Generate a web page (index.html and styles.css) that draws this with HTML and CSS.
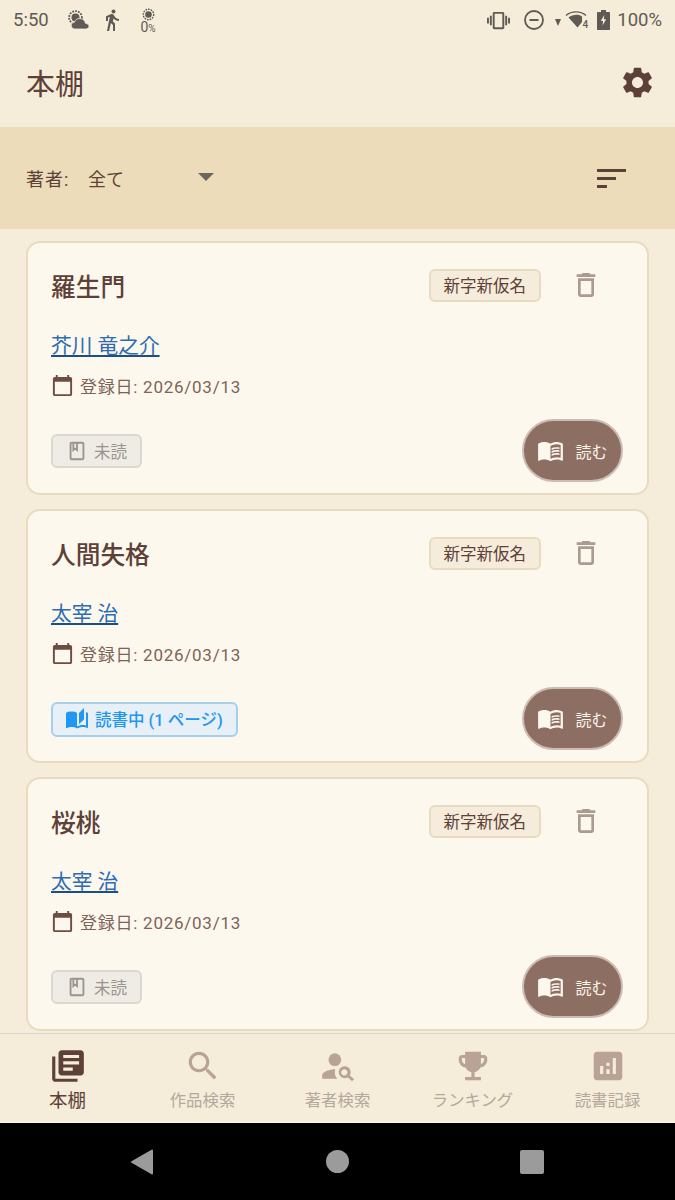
FILE: index.html
```html
<!DOCTYPE html>
<html lang="ja">
<head>
    <meta charset="UTF-8">
    <meta name="viewport" content="width=device-width, initial-scale=1.0">
    <title>本棚</title>
    <link rel="stylesheet" href="styles.css">
</head>
<body>
    <svg class="sprite">
        <symbol id="i-trash" viewBox="0 0 24 24"><path d="M6 19c0 1.1.9 2 2 2h8c1.1 0 2-.9 2-2V7H6v12zM8 9h8v10H8V9zm7.5-5l-1-1h-5l-1 1H5v2h14V4z"/></symbol>
        <symbol id="i-calendar" viewBox="0 0 24 24"><path d="M20 3h-1V1h-2v2H7V1H5v2H4c-1.1 0-2 .9-2 2v16c0 1.1.9 2 2 2h16c1.1 0 2-.9 2-2V5c0-1.1-.9-2-2-2zm0 18H4V8h16v13z"/></symbol>
        <symbol id="i-book" viewBox="0 0 24 24"><path d="M18 2H6c-1.1 0-2 .9-2 2v16c0 1.1.9 2 2 2h12c1.1 0 2-.9 2-2V4c0-1.1-.9-2-2-2zM9 4h2v5l-1-.75L9 9V4zm9 16H6V4h1v9l3-2.25L13 13V4h5v16z"/></symbol>
        <symbol id="i-menubook" viewBox="0 0 24 24"><path d="M21 5c-1.11-.35-2.33-.5-3.5-.5-1.95 0-4.05.4-5.5 1.5-1.45-1.1-3.55-1.5-5.5-1.5S2.45 4.9 1 6v14.65c0 .25.25.5.5.5.1 0 .15-.05.25-.05C3.1 20.45 5.05 20 6.5 20c1.95 0 4.05.4 5.5 1.5 1.35-.85 3.8-1.5 5.5-1.5 1.65 0 3.35.3 4.75 1.05.1.05.15.05.25.05.25 0 .5-.25.5-.5V6c-.6-.45-1.25-.75-2-1zm0 13.5c-1.1-.35-2.3-.5-3.5-.5-1.7 0-4.15.65-5.5 1.5V8c1.35-.85 3.8-1.5 5.5-1.5 1.2 0 2.4.15 3.5.5v11.5z"/><path d="M17.5 10.5c.88 0 1.73.09 2.5.26V9.24c-.79-.15-1.64-.24-2.5-.24-1.7 0-3.24.29-4.5.83v1.66c1.13-.64 2.7-.99 4.5-.99zM13 12.49v1.66c1.13-.64 2.7-.99 4.5-.99.88 0 1.73.09 2.5.26V11.9c-.79-.15-1.64-.24-2.5-.24-1.7 0-3.24.3-4.5.83zM17.5 14.33c-1.7 0-3.24.29-4.5.83v1.66c1.13-.64 2.7-.99 4.5-.99.88 0 1.73.09 2.5.26v-1.52c-.79-.16-1.64-.24-2.5-.24z"/></symbol>
    </svg>

    <div class="app">
        <header class="top">
            <div class="status">
                <span class="clock">5:50</span>
                <svg class="st-weather" viewBox="0 0 22 20"><circle cx="7.5" cy="7.5" r="6.4" fill="none" stroke="#5f5b54" stroke-width="1.8" stroke-dasharray="1.8 1.1"/><circle cx="7.5" cy="7.5" r="4" fill="#5f5b54"/><path d="M7 19c-2.2 0-3.8-1.5-3.8-3.4 0-1.8 1.4-3.2 3.2-3.4C7.2 10 9.2 8.5 11.8 8.5c3 0 5.3 2.1 5.6 4.8 2 .1 3.6 1.4 3.6 2.9 0 1.6-1.5 2.8-3.4 2.8z" fill="#5f5b54" stroke="#f5ecda" stroke-width=".8"/></svg>
                <svg class="st-walk" viewBox="0 0 24 24"><path d="M13.5 5.5c1.1 0 2-.9 2-2s-.9-2-2-2-2 .9-2 2 .9 2 2 2zM9.8 8.9L7 23h2.1l1.8-8 2.1 2v6h2v-7.5l-2.1-2 .6-3C14.8 12 16.8 13 19 13v-2c-1.9 0-3.5-1-4.3-2.4l-1-1.6c-.4-.6-1-1-1.7-1-.3 0-.5.1-.8.1L6 8.3V13h2V9.6l1.8-.7"/></svg>
                <div class="st-saver">
                    <svg viewBox="0 0 12 12"><circle cx="6" cy="6" r="4.8" fill="none" stroke="#5f5b54" stroke-width="1.3" stroke-dasharray="1.5 .9"/><circle cx="6" cy="6" r="3" fill="#5f5b54"/></svg>
                    <span>0<small>%</small></span>
                </div>
                <div class="status-right">
                    <svg class="st-vibrate" viewBox="0 0 24 24"><path d="M0 15h2V9H0v6zm3 2h2V7H3v10zm19-8v6h2V9h-2zm-3 8h2V7h-2v10zM16.5 3h-9C6.67 3 6 3.67 6 4.5v15c0 .83.67 1.5 1.5 1.5h9c.83 0 1.5-.67 1.5-1.5v-15c0-.83-.67-1.5-1.5-1.5zM16 19H8V5h8v14z"/></svg>
                    <svg class="st-dnd" viewBox="0 0 20 20"><circle cx="10" cy="10" r="9" fill="none" stroke="#5f5b54" stroke-width="1.8"/><rect x="5.5" y="9" width="9" height="2" fill="#5f5b54"/></svg>
                    <span class="st-arrow"></span>
                    <div class="st-wifi">
                        <svg viewBox="0 0 22 17"><path d="M1 4.5C6.5-.3 15.500-.3 21 4.500" fill="none" stroke="#5f5b54" stroke-width="1.3"/><path d="M3.5 6.500C7.5 3 14.500 3 17 5.500V11l-4.500 5.500z" fill="#5f5b54"/></svg>
                        <span>4</span>
                    </div>
                    <svg class="st-battery" viewBox="0 0 13 20"><path d="M4 0h5v2h3c.6 0 1 .4 1 1v16c0 .6-.4 1-1 1H1c-.6 0-1-.4-1-1V3c0-.6.4-1 1-1h3z" fill="#5f5b54"/><path d="M7.3 5L3.8 11h2.3l-.6 4.500L9.200 9.300H6.900z" fill="#f5ecda"/></svg>
                    <span class="st-level">100%</span>
                </div>
            </div>
            <div class="appbar">
                <h1>本棚</h1>
                <svg class="settings" viewBox="0 0 24 24"><path d="M19.14 12.94c.04-.3.06-.61.06-.94 0-.32-.02-.64-.07-.94l2.03-1.58c.18-.14.23-.41.12-.61l-1.92-3.32c-.12-.22-.37-.29-.59-.22l-2.39.96c-.5-.38-1.03-.7-1.62-.94l-.36-2.54c-.04-.24-.24-.41-.48-.41h-3.84c-.24 0-.43.17-.47.41l-.36 2.54c-.59.24-1.13.57-1.62.94l-2.39-.96c-.22-.08-.47 0-.59.22L2.74 8.87c-.12.21-.08.47.12.61l2.03 1.58c-.05.3-.09.63-.09.94s.02.64.07.94l-2.03 1.58c-.18.14-.23.41-.12.61l1.92 3.32c.12.22.37.29.59.22l2.39-.96c.5.38 1.03.7 1.62.94l.36 2.54c.05.24.24.41.48.41h3.84c.24 0 .44-.17.47-.41l.36-2.54c.59-.24 1.13-.56 1.62-.94l2.39.96c.22.08.47 0 .59-.22l1.92-3.32c.12-.22.07-.47-.12-.61l-2.01-1.58zM12 15.6c-1.98 0-3.6-1.62-3.6-3.6s1.62-3.6 3.6-3.6 3.6 1.62 3.6 3.6-1.62 3.6-3.6 3.6z"/></svg>
            </div>
        </header>

        <div class="filter">
            <span class="filter-label">著者:</span>
            <div class="select">
                <span>全て</span>
                <span class="select-arrow"></span>
            </div>
            <div class="sort">
                <span class="sort-long"></span>
                <span class="sort-mid"></span>
                <span class="sort-short"></span>
            </div>
        </div>

        <main class="list">
            <article class="card">
                <div class="card-head">
                    <h2>羅生門</h2>
                    <span class="tag">新字新仮名</span>
                    <svg class="trash"><use href="#i-trash"/></svg>
                </div>
                <a class="author" href="#">芥川 竜之介</a>
                <div class="date">
                    <svg><use href="#i-calendar"/></svg>
                    <span>登録日: 2026/03/13</span>
                </div>
                <div class="card-foot">
                    <span class="chip chip-unread">
                        <svg><use href="#i-book"/></svg>
                        未読
                    </span>
                    <button class="read" type="button">
                        <svg><use href="#i-menubook"/></svg>
                        読む
                    </button>
                </div>
            </article>

            <article class="card">
                <div class="card-head">
                    <h2>人間失格</h2>
                    <span class="tag">新字新仮名</span>
                    <svg class="trash"><use href="#i-trash"/></svg>
                </div>
                <a class="author" href="#">太宰 治</a>
                <div class="date">
                    <svg><use href="#i-calendar"/></svg>
                    <span>登録日: 2026/03/13</span>
                </div>
                <div class="card-foot">
                    <span class="chip chip-reading">
                        <svg viewBox="0 0 24 24"><path d="M19 1l-5 5v11l5-4.5V1zM1 6v14.65c0 .25.25.5.5.5.1 0 .15-.05.25-.05C3.1 20.45 5.05 20 6.5 20c1.95 0 4.05.4 5.5 1.5V6c-1.45-1.1-3.55-1.5-5.5-1.5S2.45 4.9 1 6zm22 13.5V6c-.6-.45-1.25-.75-2-1v13.5c-1.1-.35-2.3-.5-3.5-.5-1.7 0-4.15.65-5.5 1.5v2c1.35-.85 3.8-1.5 5.5-1.5 1.65 0 3.35.3 4.75 1.05.1.05.15.05.25.05.25 0 .5-.25.5-.5v-1.1z"/></svg>
                        読書中 (1 ページ)
                    </span>
                    <button class="read" type="button">
                        <svg><use href="#i-menubook"/></svg>
                        読む
                    </button>
                </div>
            </article>

            <article class="card">
                <div class="card-head">
                    <h2>桜桃</h2>
                    <span class="tag">新字新仮名</span>
                    <svg class="trash"><use href="#i-trash"/></svg>
                </div>
                <a class="author" href="#">太宰 治</a>
                <div class="date">
                    <svg><use href="#i-calendar"/></svg>
                    <span>登録日: 2026/03/13</span>
                </div>
                <div class="card-foot">
                    <span class="chip chip-unread">
                        <svg><use href="#i-book"/></svg>
                        未読
                    </span>
                    <button class="read" type="button">
                        <svg><use href="#i-menubook"/></svg>
                        読む
                    </button>
                </div>
            </article>
        </main>

        <nav class="tabs">
            <div class="tab active">
                <svg viewBox="0 0 24 24"><path d="M4 6H2v14c0 1.1.9 2 2 2h14v-2H4V6zm16-4H8c-1.1 0-2 .9-2 2v12c0 1.1.9 2 2 2h12c1.1 0 2-.9 2-2V4c0-1.1-.9-2-2-2zm-1 9H9V9h10v2zm-4 4H9v-2h6v2zm4-8H9V5h10v2z"/></svg>
                <span>本棚</span>
            </div>
            <div class="tab">
                <svg viewBox="0 0 24 24"><path d="M15.5 14h-.79l-.28-.27C15.41 12.59 16 11.11 16 9.5 16 5.91 13.09 3 9.5 3S3 5.91 3 9.5 5.91 16 9.5 16c1.61 0 3.09-.59 4.23-1.57l.27.28v.79l5 4.99L20.49 19l-4.99-5zm-6 0C7.01 14 5 11.99 5 9.5S7.01 5 9.5 5 14 7.01 14 9.5 11.99 14 9.5 14z"/></svg>
                <span>作品検索</span>
            </div>
            <div class="tab">
                <svg viewBox="0 0 24 24"><circle cx="10" cy="8" r="4"/><path d="M10.35 14.01C7.62 13.91 2 15.27 2 18v2h9.54c-2.47-2.76-1.23-5.89-1.19-5.99z"/><path d="M19.43 18.02c.47-.8.7-1.77.5-2.81-.3-1.57-1.63-2.8-3.21-3.02-2.5-.35-4.58 1.75-4.22 4.24.23 1.57 1.45 2.88 3 3.19 1.03.2 2 .03 2.8-.43l2.52 2.52 1.41-1.41-2.8-2.28zM16 18c-1.1 0-2-.9-2-2s.9-2 2-2 2 .9 2 2-.9 2-2 2z"/></svg>
                <span>著者検索</span>
            </div>
            <div class="tab">
                <svg viewBox="0 0 24 24"><path d="M19 5h-2V3H7v2H5c-1.1 0-2 .9-2 2v1c0 2.55 1.92 4.63 4.39 4.94.63 1.5 1.98 2.63 3.61 2.96V19H7v2h10v-2h-4v-3.1c1.63-.33 2.98-1.46 3.61-2.96C19.08 12.63 21 10.55 21 8V7c0-1.1-.9-2-2-2zM5 8V7h2v3.82C5.84 10.4 5 9.3 5 8zm14 0c0 1.3-.84 2.4-2 2.82V7h2v1z"/></svg>
                <span>ランキング</span>
            </div>
            <div class="tab">
                <svg viewBox="0 0 24 24"><path d="M19 3H5c-1.1 0-2 .9-2 2v14c0 1.1.9 2 2 2h14c1.1 0 2-.9 2-2V5c0-1.1-.9-2-2-2zM9 17H7v-5h2v5zm4 0h-2v-3h2v3zm0-5h-2v-2h2v2zm4 5h-2V7h2v10z"/></svg>
                <span>読書記録</span>
            </div>
        </nav>

        <div class="sysbar">
            <svg class="sys-back" viewBox="0 0 24 26"><path d="M22 1.5v23L2 13z" fill="#9b9b9b" stroke="#9b9b9b" stroke-width="2" stroke-linejoin="round"/></svg>
            <span class="sys-home"></span>
            <span class="sys-recent"></span>
        </div>
    </div>
</body>
</html>
```

FILE: styles.css
```css
* {
    box-sizing: border-box;
}
body {
    margin: 0;
    font-family: Roboto, "Noto Sans CJK JP", sans-serif;
    background: #f5ecda;
    color: #5d4037;
}
.sprite {
    display: none;
}
.app {
    width: 675px;
    height: 1200px;
    display: flex;
    flex-direction: column;
    overflow: hidden;
}

/* status bar */
.top {
    height: 127px;
    background: #f5ecda;
}
.status {
    height: 40px;
    display: flex;
    align-items: center;
    padding: 0 13px;
    color: #5f5b54;
    fill: #5f5b54;
}
.clock {
    font-size: 18.5px;
    width: 55px;
}
.st-weather {
    width: 22px;
    height: 20px;
    margin-right: 10px;
}
.st-walk {
    width: 24px;
    height: 24px;
    margin-right: 15px;
}
.st-saver {
    display: flex;
    flex-direction: column;
    align-items: center;
    width: 18px;
    padding-top: 3px;
}
.st-saver svg {
    width: 13px;
    height: 13px;
}
.st-saver span {
    font-size: 14px;
    line-height: 13px;
}
.st-saver small {
    font-size: 10px;
}
.status-right {
    margin-left: auto;
    display: flex;
    align-items: center;
}
.st-vibrate {
    width: 23px;
    height: 23px;
    margin-right: 14px;
}
.st-dnd {
    width: 20px;
    height: 20px;
    margin-right: 11px;
}
.st-arrow {
    width: 0;
    height: 0;
    border-left: 3.5px solid transparent;
    border-right: 3.5px solid transparent;
    border-top: 7px solid #5f5b54;
    margin: 5px 4px 0 0;
}
.st-wifi {
    position: relative;
    width: 22px;
    height: 18px;
    margin-right: 10px;
}
.st-wifi svg {
    width: 22px;
    height: 17px;
}
.st-wifi span {
    position: absolute;
    right: -1px;
    bottom: -1px;
    font-size: 10px;
    font-weight: 500;
}
.st-battery {
    width: 13px;
    height: 20px;
    margin-right: 7px;
}
.st-level {
    font-size: 18.5px;
}

/* app bar */
.appbar {
    height: 87px;
    display: flex;
    align-items: center;
    justify-content: space-between;
    padding: 0 19px 0 26px;
}
.appbar h1 {
    margin: 3px 0 0;
    font-size: 29px;
    font-weight: 400;
    line-height: 40px;
}
.settings {
    width: 37px;
    height: 37px;
    fill: #5d4037;
    margin-bottom: 2px;
}

/* filter row */
.filter {
    height: 102px;
    flex-shrink: 0;
    background: #ecdcb9;
    display: flex;
    align-items: center;
    padding: 0 49px 0 26px;
    font-size: 18px;
}
.filter-label {
    width: 62px;
    letter-spacing: 1px;
}
.select {
    display: flex;
    align-items: center;
    width: 126px;
    justify-content: space-between;
}
.select-arrow {
    width: 0;
    height: 0;
    border-left: 8px solid transparent;
    border-right: 8px solid transparent;
    border-top: 8px solid #6b6660;
    margin-bottom: 3px;
}
.sort {
    margin-left: auto;
    display: flex;
    flex-direction: column;
    gap: 5px;
    width: 29px;
}
.sort span {
    display: block;
    height: 3px;
    background: #5d4037;
}
.sort-long {
    width: 29px;
}
.sort-mid {
    width: 19px;
}
.sort-short {
    width: 10px;
}

/* book list */
.list {
    flex: 1;
    min-height: 0;
    padding: 12px 26px 0;
    display: flex;
    flex-direction: column;
    gap: 14px;
}
.card {
    height: 254px;
    flex-shrink: 0;
    background: #fdf8ee;
    border: 2px solid #e8dbbf;
    border-radius: 14px;
    padding: 25px 24px 11px 23px;
    display: flex;
    flex-direction: column;
    align-items: flex-start;
}
.card-head {
    width: 100%;
    height: 34px;
    display: flex;
    align-items: center;
}
.card-head h2 {
    margin: 0;
    flex: 1;
    font-size: 24.7px;
    font-weight: 500;
}
.tag {
    height: 33px;
    padding: 0 13px;
    display: flex;
    align-items: center;
    background: #f5ecdc;
    border: 2px solid #e8dbbf;
    border-radius: 6px;
    font-size: 16.5px;
}
.trash {
    width: 32px;
    height: 32px;
    fill: #ac9a90;
    margin: 0 21px 0 29px;
}
.author {
    margin-top: 29px;
    font-size: 20.7px;
    line-height: 30px;
    color: #2b6cb4;
    text-decoration-color: #1d4f80;
}
.date {
    margin-top: 11px;
    height: 28px;
    display: flex;
    align-items: center;
    gap: 6px;
    font-size: 17px;
    letter-spacing: .75px;
    color: #7d6357;
}
.date svg {
    width: 23px;
    height: 23px;
    fill: #6d4c41;
}
.card-foot {
    width: 100%;
    margin-top: 21px;
    height: 62px;
    display: flex;
    align-items: center;
    justify-content: space-between;
}
.chip {
    height: 34px;
    display: flex;
    align-items: center;
    gap: 6px;
    padding: 0 13px;
    border-radius: 6px;
    border: 2px solid;
    font-size: 16.5px;
}
.chip svg {
    width: 22px;
    height: 22px;
    fill: currentColor;
}
.chip-unread {
    background: #efebe5;
    border-color: #dcd8d1;
    color: #9b948c;
}
.chip-reading {
    height: 35px;
    padding-left: 12px;
    background: #e6f0f6;
    border-color: #a6cfec;
    color: #2196f3;
    font-weight: 500;
}
.chip-reading svg {
    width: 24px;
    height: 24px;
}
.read {
    width: 101px;
    height: 63px;
    margin-top: -1px;
    display: flex;
    align-items: center;
    justify-content: center;
    gap: 11px;
    background: #8d6e63;
    border: 2px solid #cdbcb2;
    border-radius: 32px;
    padding: 0;
    color: #fbf4e8;
    font-family: inherit;
    font-size: 16px;
}
.read svg {
    width: 27px;
    height: 27px;
    fill: #fdf8ee;
}

/* bottom tabs */
.tabs {
    height: 90px;
    flex-shrink: 0;
    display: grid;
    grid-template-columns: repeat(5, 1fr);
    background: #f5ecda;
    border-top: 1px solid #d5d6cf;
    border-bottom: 1px solid #fbf7ee;
}
.tab {
    display: flex;
    flex-direction: column;
    align-items: center;
    padding-top: 13px;
    color: #b5a89c;
    fill: #b9a397;
    font-size: 16.4px;
    line-height: 24px;
}
.tab svg {
    width: 38px;
    height: 38px;
}
.tab span {
    margin-top: 4px;
}
.tab.active {
    color: #5d4037;
    fill: #5d4037;
    font-size: 18.5px;
}

/* system nav */
.sysbar {
    height: 77px;
    flex-shrink: 0;
    background: #000;
    display: flex;
    align-items: center;
    justify-content: space-between;
    padding: 0 131px 0 130px;
}
.sys-back {
    width: 24px;
    height: 26px;
}
.sys-home {
    width: 23px;
    height: 23px;
    border-radius: 50%;
    background: #9b9b9b;
}
.sys-recent {
    width: 24px;
    height: 24px;
    border-radius: 2px;
    background: #9b9b9b;
}
```
